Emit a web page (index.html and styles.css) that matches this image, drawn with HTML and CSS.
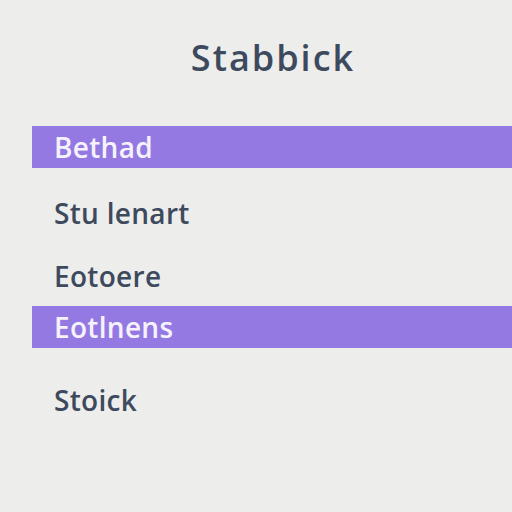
FILE: index.html
```html
<!DOCTYPE html>
<html lang="en">
<head>
<meta charset="utf-8">
<title>Stabbick</title>
<link rel="stylesheet" href="styles.css">
</head>
<body>
<main class="panel">
  <h1 class="title">Stabbick</h1>
  <ul class="list">
    <li class="item item--active">Bethad</li>
    <li class="item item--gap-l">Stu lenart</li>
    <li class="item item--gap-m">Eotoere</li>
    <li class="item item--active item--gap-s">Eotlnens</li>
    <li class="item item--gap-xl">Stoick</li>
  </ul>
</main>
</body>
</html>
```
FILE: styles.css
```css
* { box-sizing: border-box; }
html, body { margin: 0; padding: 0; }
body {
  width: 512px;
  height: 512px;
  background: #ededec;
  font-family: "Open Sans", "Liberation Sans", sans-serif;
  color: #3d4a5d;
  overflow: hidden;
}
.panel {
  padding: 36px 0 0 32px;
  display: flex;
  flex-direction: column;
}
.title {
  margin: 0;
  font-size: 36px;
  line-height: 44px;
  font-weight: 600;
  text-align: center;
  letter-spacing: 2px;
  padding-left: 2px;
}
.list {
  list-style: none;
  margin: 46px 0 0;
  padding: 0;
  display: flex;
  flex-direction: column;
}
.item {
  height: 42px;
  line-height: 42px;
  padding-left: 22px;
  font-size: 28px;
  font-weight: 600;
  letter-spacing: 0.3px;
}
.item--active {
  background: #9479e3;
  color: #f6f2fc;
}
.item--gap-l { margin-top: 24px; }
.item--gap-m { margin-top: 21px; }
.item--gap-s { margin-top: 9px; }
.item--gap-xl { margin-top: 31px; }
```
